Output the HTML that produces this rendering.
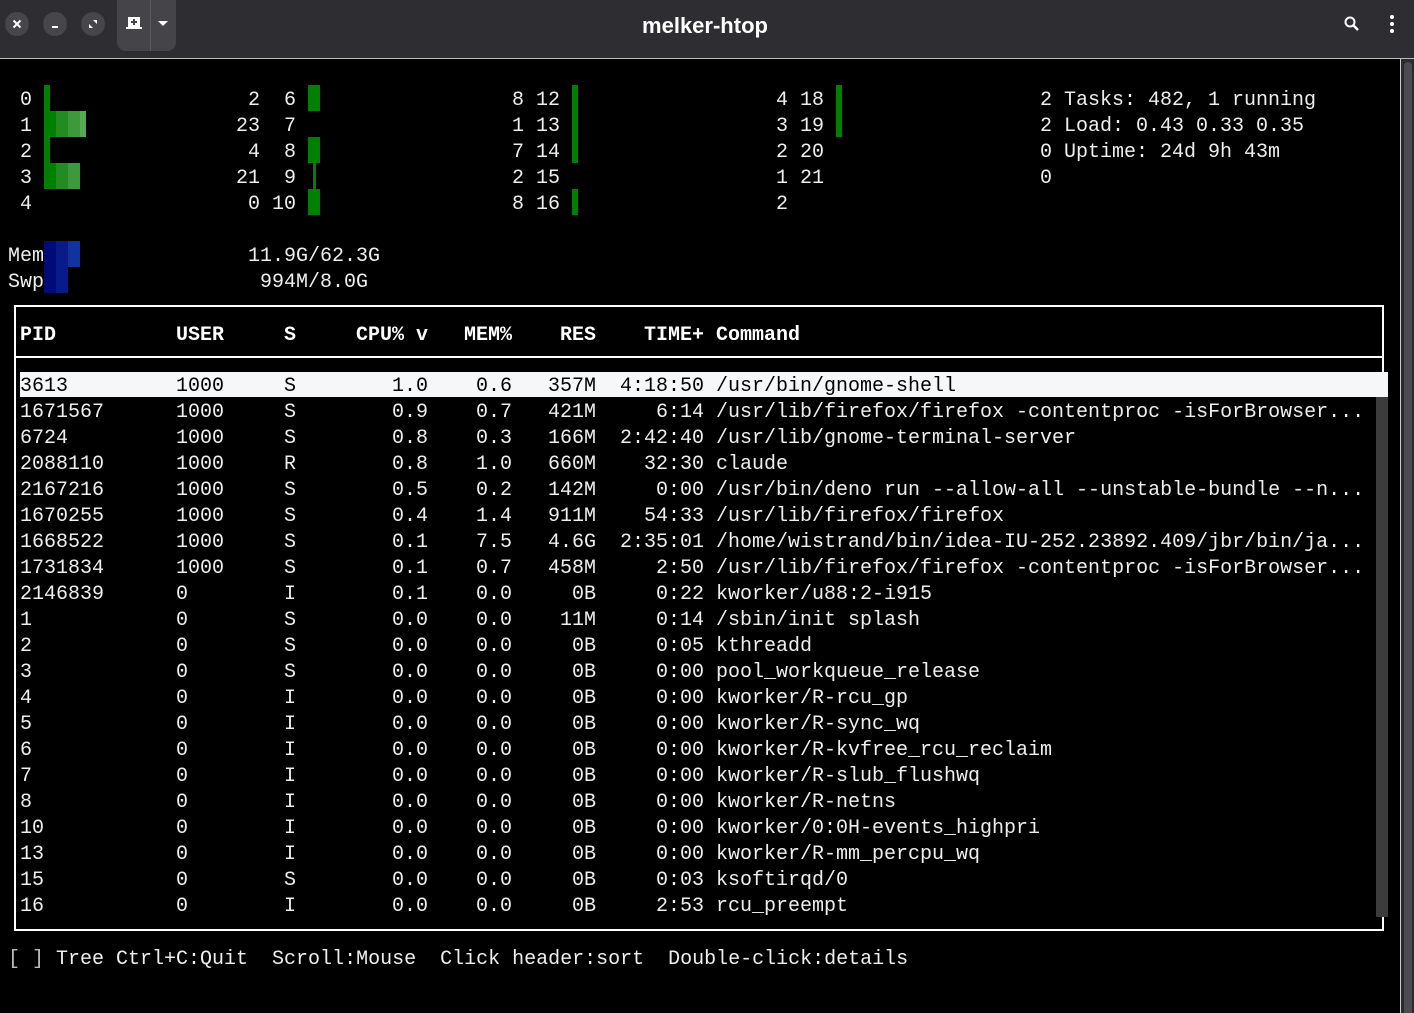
<!DOCTYPE html>
<html><head><meta charset="utf-8"><style>
*{margin:0;padding:0;box-sizing:border-box}
body{width:1414px;height:1013px;background:#000;overflow:hidden;position:relative;font-family:"Liberation Mono",monospace;font-size:20px;color:#eee}
.tb{position:absolute;left:0;top:0;width:1414px;height:58px;background:#2e2e32}
.tl{position:absolute;left:0;top:58px;width:1414px;height:1px;background:#bbb}
.title{position:absolute;left:0;width:1410px;top:13px;text-align:center;font-family:"Liberation Sans",sans-serif;font-weight:bold;font-size:22px;color:#fff}
.cb{position:absolute;top:12px;width:24px;height:24px;border-radius:50%;background:#46464b}
.t{position:absolute;white-space:pre;line-height:26px;height:26px;transform:translateY(3px)}
.b{position:absolute}
.row{position:absolute;left:20px;height:26px;line-height:26px;white-space:pre;display:flex}
.row span{display:block;transform:translateY(3px)}
.c1{width:156px}.c2{width:108px}.c3{width:12px}.c4{width:132px;text-align:right}.c5{width:84px;text-align:right}.c6{width:84px;text-align:right}.c7{width:108px;text-align:right}.c8{margin-left:12px}
.sel{color:#000}
.hdr{font-weight:bold;color:#fff}
</style></head><body>
<div class="tb"></div><div class="tl"></div>
<div class="title">melker-htop</div>
<div class="cb" style="left:5px"><svg width="24" height="24"><path d="M8.5 8.5l7 7M15.5 8.5l-7 7" stroke="#fff" stroke-width="2"/></svg></div>
<div class="cb" style="left:43px"><svg width="24" height="24"><rect x="9" y="14" width="6" height="2" fill="#fff"/></svg></div>
<div class="cb" style="left:81px"><svg width="24" height="24"><path d="M12 8h4v4zM12 16h-4v-4z" fill="#fff"/></svg></div>
<div style="position:absolute;left:117px;top:0;width:59px;height:51px;background:#454549;border-radius:0 0 9px 9px"></div>
<div style="position:absolute;left:150px;top:0;width:1px;height:51px;background:#5a5a5e"></div>
<svg style="position:absolute;left:125px;top:15px" width="18" height="16"><path d="M3 2h12v10h2v2H1v-2h2z" fill="#fff"/><path d="M9 4v6M6 7h6" stroke="#454549" stroke-width="2"/></svg>
<svg style="position:absolute;left:157px;top:20px" width="12" height="8"><path d="M1 1h10l-5 5z" fill="#fff"/></svg>
<svg style="position:absolute;left:1343px;top:15px" width="18" height="18"><circle cx="7" cy="7" r="4.5" stroke="#fff" stroke-width="2" fill="none"/><path d="M10 10l5 5" stroke="#fff" stroke-width="2.5"/></svg>
<svg style="position:absolute;left:1388px;top:14px" width="8" height="20"><circle cx="4" cy="3" r="2" fill="#fff"/><circle cx="4" cy="10" r="2" fill="#fff"/><circle cx="4" cy="17" r="2" fill="#fff"/></svg>
<div style="position:absolute;left:1400px;top:59px;width:1px;height:954px;background:#ccc"></div>
<div style="position:absolute;left:1401px;top:59px;width:13px;height:954px;background:#2b2b2f"></div>
<div style="position:absolute;left:1404px;top:62px;width:8px;height:951px;background:#4c4c50;border-radius:4px 4px 0 0"></div>

<div class="t" style="left:20px;top:85px">0</div>
<div class="t" style="left:20px;top:111px">1</div>
<div class="t" style="left:20px;top:137px">2</div>
<div class="t" style="left:20px;top:163px">3</div>
<div class="t" style="left:20px;top:189px">4</div>
<div class="b" style="left:44px;top:85px;width:6px;height:26px;background:#008000"></div>
<div class="b" style="left:44px;top:111px;width:12px;height:26px;background:#008000"></div>
<div class="b" style="left:56px;top:111px;width:12px;height:26px;background:#228b22"></div>
<div class="b" style="left:68px;top:111px;width:12px;height:26px;background:#3c9a3c"></div>
<div class="b" style="left:80px;top:111px;width:6px;height:26px;background:#55aa55"></div>
<div class="b" style="left:44px;top:137px;width:6px;height:26px;background:#008000"></div>
<div class="b" style="left:44px;top:163px;width:12px;height:26px;background:#008000"></div>
<div class="b" style="left:56px;top:163px;width:12px;height:26px;background:#228b22"></div>
<div class="b" style="left:68px;top:163px;width:12px;height:26px;background:#3c9a3c"></div>

<div class="t" style="left:248px;top:85px">2  6</div>
<div class="t" style="left:236px;top:111px">23  7</div>
<div class="t" style="left:248px;top:137px">4  8</div>
<div class="t" style="left:236px;top:163px">21  9</div>
<div class="t" style="left:248px;top:189px">0 10</div>
<div class="b" style="left:308px;top:85px;width:12px;height:26px;background:#008000"></div>
<div class="b" style="left:308px;top:137px;width:12px;height:26px;background:#008000"></div>
<div class="b" style="left:313px;top:163px;width:3px;height:26px;background:#008000"></div>
<div class="b" style="left:308px;top:189px;width:12px;height:26px;background:#008000"></div>

<div class="t" style="left:512px;top:85px">8 12</div>
<div class="t" style="left:512px;top:111px">1 13</div>
<div class="t" style="left:512px;top:137px">7 14</div>
<div class="t" style="left:512px;top:163px">2 15</div>
<div class="t" style="left:512px;top:189px">8 16</div>
<div class="b" style="left:572px;top:85px;width:6px;height:78px;background:#008000"></div>
<div class="b" style="left:572px;top:189px;width:6px;height:26px;background:#008000"></div>

<div class="t" style="left:776px;top:85px">4 18</div>
<div class="t" style="left:776px;top:111px">3 19</div>
<div class="t" style="left:776px;top:137px">2 20</div>
<div class="t" style="left:776px;top:163px">1 21</div>
<div class="t" style="left:776px;top:189px">2</div>
<div class="b" style="left:836px;top:85px;width:6px;height:52px;background:#008000"></div>

<div class="t" style="left:1040px;top:85px">2 Tasks: 482, 1 running</div>
<div class="t" style="left:1040px;top:111px">2 Load: 0.43 0.33 0.35</div>
<div class="t" style="left:1040px;top:137px">0 Uptime: 24d 9h 43m</div>
<div class="t" style="left:1040px;top:163px">0</div>

<div class="t" style="left:8px;top:241px">Mem</div>
<div class="t" style="left:8px;top:267px">Swp</div>
<div class="b" style="left:44px;top:241px;width:12px;height:52px;background:#000a78"></div>
<div class="b" style="left:56px;top:241px;width:12px;height:52px;background:#0a1a88"></div>
<div class="b" style="left:68px;top:241px;width:12px;height:26px;background:#1232a0"></div>
<div class="t" style="left:248px;top:241px">11.9G/62.3G</div>
<div class="t" style="left:260px;top:267px">994M/8.0G</div>

<div style="position:absolute;left:14px;top:305px;width:1370px;height:626px;border:2px solid #fff"></div>
<div style="position:absolute;left:14px;top:356px;width:1370px;height:2px;background:#fff"></div>
<div class="row hdr" style="top:320px"><span class="c1">PID</span><span class="c2">USER</span><span class="c3">S</span><span class="c4">CPU% v</span><span class="c5">MEM%</span><span class="c6">RES</span><span class="c7">TIME+</span><span class="c8">Command</span></div>
<div style="position:absolute;left:20px;top:372px;width:1368px;height:25px;background:#f6f7f9"></div>
<div style="position:absolute;left:1376px;top:397px;width:12px;height:520px;background:#3c3c3c"></div>

<div class="row sel" style="top:371px"><span class="c1">3613</span><span class="c2">1000</span><span class="c3">S</span><span class="c4">1.0</span><span class="c5">0.6</span><span class="c6">357M</span><span class="c7">4:18:50</span><span class="c8">/usr/bin/gnome-shell</span></div>
<div class="row" style="top:397px"><span class="c1">1671567</span><span class="c2">1000</span><span class="c3">S</span><span class="c4">0.9</span><span class="c5">0.7</span><span class="c6">421M</span><span class="c7">6:14</span><span class="c8">/usr/lib/firefox/firefox -contentproc -isForBrowser...</span></div>
<div class="row" style="top:423px"><span class="c1">6724</span><span class="c2">1000</span><span class="c3">S</span><span class="c4">0.8</span><span class="c5">0.3</span><span class="c6">166M</span><span class="c7">2:42:40</span><span class="c8">/usr/lib/gnome-terminal-server</span></div>
<div class="row" style="top:449px"><span class="c1">2088110</span><span class="c2">1000</span><span class="c3">R</span><span class="c4">0.8</span><span class="c5">1.0</span><span class="c6">660M</span><span class="c7">32:30</span><span class="c8">claude</span></div>
<div class="row" style="top:475px"><span class="c1">2167216</span><span class="c2">1000</span><span class="c3">S</span><span class="c4">0.5</span><span class="c5">0.2</span><span class="c6">142M</span><span class="c7">0:00</span><span class="c8">/usr/bin/deno run --allow-all --unstable-bundle --n...</span></div>
<div class="row" style="top:501px"><span class="c1">1670255</span><span class="c2">1000</span><span class="c3">S</span><span class="c4">0.4</span><span class="c5">1.4</span><span class="c6">911M</span><span class="c7">54:33</span><span class="c8">/usr/lib/firefox/firefox</span></div>
<div class="row" style="top:527px"><span class="c1">1668522</span><span class="c2">1000</span><span class="c3">S</span><span class="c4">0.1</span><span class="c5">7.5</span><span class="c6">4.6G</span><span class="c7">2:35:01</span><span class="c8">/home/wistrand/bin/idea-IU-252.23892.409/jbr/bin/ja...</span></div>
<div class="row" style="top:553px"><span class="c1">1731834</span><span class="c2">1000</span><span class="c3">S</span><span class="c4">0.1</span><span class="c5">0.7</span><span class="c6">458M</span><span class="c7">2:50</span><span class="c8">/usr/lib/firefox/firefox -contentproc -isForBrowser...</span></div>
<div class="row" style="top:579px"><span class="c1">2146839</span><span class="c2">0</span><span class="c3">I</span><span class="c4">0.1</span><span class="c5">0.0</span><span class="c6">0B</span><span class="c7">0:22</span><span class="c8">kworker/u88:2-i915</span></div>
<div class="row" style="top:605px"><span class="c1">1</span><span class="c2">0</span><span class="c3">S</span><span class="c4">0.0</span><span class="c5">0.0</span><span class="c6">11M</span><span class="c7">0:14</span><span class="c8">/sbin/init splash</span></div>
<div class="row" style="top:631px"><span class="c1">2</span><span class="c2">0</span><span class="c3">S</span><span class="c4">0.0</span><span class="c5">0.0</span><span class="c6">0B</span><span class="c7">0:05</span><span class="c8">kthreadd</span></div>
<div class="row" style="top:657px"><span class="c1">3</span><span class="c2">0</span><span class="c3">S</span><span class="c4">0.0</span><span class="c5">0.0</span><span class="c6">0B</span><span class="c7">0:00</span><span class="c8">pool_workqueue_release</span></div>
<div class="row" style="top:683px"><span class="c1">4</span><span class="c2">0</span><span class="c3">I</span><span class="c4">0.0</span><span class="c5">0.0</span><span class="c6">0B</span><span class="c7">0:00</span><span class="c8">kworker/R-rcu_gp</span></div>
<div class="row" style="top:709px"><span class="c1">5</span><span class="c2">0</span><span class="c3">I</span><span class="c4">0.0</span><span class="c5">0.0</span><span class="c6">0B</span><span class="c7">0:00</span><span class="c8">kworker/R-sync_wq</span></div>
<div class="row" style="top:735px"><span class="c1">6</span><span class="c2">0</span><span class="c3">I</span><span class="c4">0.0</span><span class="c5">0.0</span><span class="c6">0B</span><span class="c7">0:00</span><span class="c8">kworker/R-kvfree_rcu_reclaim</span></div>
<div class="row" style="top:761px"><span class="c1">7</span><span class="c2">0</span><span class="c3">I</span><span class="c4">0.0</span><span class="c5">0.0</span><span class="c6">0B</span><span class="c7">0:00</span><span class="c8">kworker/R-slub_flushwq</span></div>
<div class="row" style="top:787px"><span class="c1">8</span><span class="c2">0</span><span class="c3">I</span><span class="c4">0.0</span><span class="c5">0.0</span><span class="c6">0B</span><span class="c7">0:00</span><span class="c8">kworker/R-netns</span></div>
<div class="row" style="top:813px"><span class="c1">10</span><span class="c2">0</span><span class="c3">I</span><span class="c4">0.0</span><span class="c5">0.0</span><span class="c6">0B</span><span class="c7">0:00</span><span class="c8">kworker/0:0H-events_highpri</span></div>
<div class="row" style="top:839px"><span class="c1">13</span><span class="c2">0</span><span class="c3">I</span><span class="c4">0.0</span><span class="c5">0.0</span><span class="c6">0B</span><span class="c7">0:00</span><span class="c8">kworker/R-mm_percpu_wq</span></div>
<div class="row" style="top:865px"><span class="c1">15</span><span class="c2">0</span><span class="c3">S</span><span class="c4">0.0</span><span class="c5">0.0</span><span class="c6">0B</span><span class="c7">0:03</span><span class="c8">ksoftirqd/0</span></div>
<div class="row" style="top:891px"><span class="c1">16</span><span class="c2">0</span><span class="c3">I</span><span class="c4">0.0</span><span class="c5">0.0</span><span class="c6">0B</span><span class="c7">2:53</span><span class="c8">rcu_preempt</span></div>

<div class="t" style="left:8px;top:944px"><span style="color:#bbb">[ ]</span> Tree Ctrl+C:Quit  Scroll:Mouse  Click header:sort  Double-click:details</div>
</body></html>
